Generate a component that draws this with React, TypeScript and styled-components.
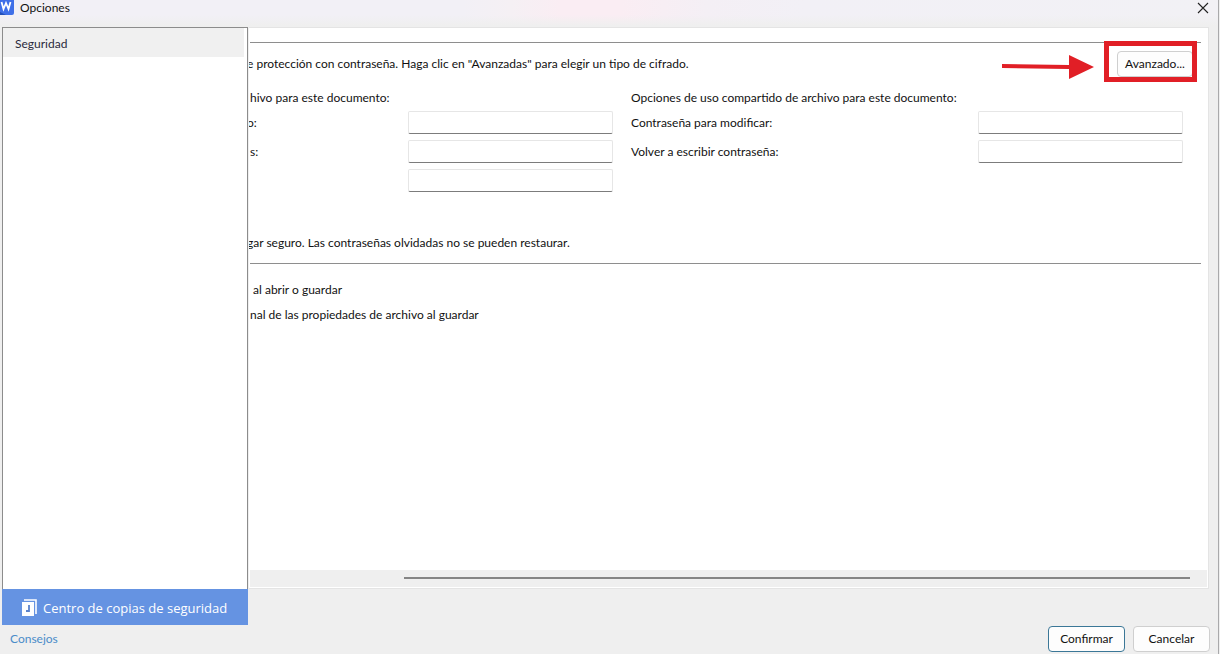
import React from 'react';
import styled, { createGlobalStyle } from 'styled-components';

const GlobalStyle = createGlobalStyle`
  * { box-sizing: border-box; }
  body { margin: 0; background: #efefef; }
  button, input { font: inherit; }
`;

const Dialog = styled.div`
  display: flex;
  flex-direction: column;
  height: 100vh;
  overflow: hidden;
  padding-left: 2px;
  margin-right: 1px;
  border-right: 1px solid #a9a9ab;
  background: #efefef;
  color: #111;
  font: 12px/20px Lato, 'Open Sans', sans-serif;
`;

const TitleBar = styled.header`
  display: flex;
  align-items: center;
  height: 27px;
  flex: none;
  margin-left: -2px;
  padding: 0 9px 12px 0;
  background:
    linear-gradient(180deg, transparent 55%, #efefef 95%),
    linear-gradient(90deg, #f2f0f6 0%, #f2f0f6 38%, #f5f0f4 42%, #faedf3 46%, #faedf3 51%, #f4eff5 58%, #f2f0f6 66%, #f2f1f5 100%);
`;

const Title = styled.h1`
  flex: 1;
  margin: 0 0 0 6px;
  font-size: 12px;
  font-weight: 400;
`;

const CloseButton = styled.button`
  display: flex;
  padding: 0;
  border: 0;
  background: none;
`;

const Body = styled.div`
  display: flex;
  flex: 1;
  min-height: 0;
`;

const Sidebar = styled.nav`
  display: flex;
  flex-direction: column;
  flex: none;
  width: 246px;
`;

const SectionList = styled.div`
  flex: 1;
  border: 1px solid #8c8c8c;
  border-bottom: 0;
  background: #fff;
`;

const SectionItem = styled.button`
  display: block;
  width: calc(100% - 3px);
  height: 29px;
  padding: 2px 12px 0;
  border: 0;
  background: #f0f0f0;
  color: #2a2a3c;
  text-align: left;
`;

const BackupButton = styled.button`
  display: flex;
  align-items: center;
  gap: 6px;
  height: 36px;
  padding: 1px 0 0 19px;
  border: 0;
  background: #6593e2;
  color: #fff;
  font-family: 'Open Sans', sans-serif;
  font-size: 13px;
  white-space: nowrap;
`;

const Panel = styled.main`
  display: flex;
  flex-direction: column;
  flex: 1;
  min-width: 0;
  margin: 0 9px 36px 1px;
  overflow: hidden;
  border: 1px solid #e4e4e4;
  border-left: 0;
  background: #fff;
  white-space: nowrap;
`;

const Content = styled.div`
  flex: 1;
  padding: 14px 7px 0 1px;
`;

const Rule = styled.hr`
  height: 1px;
  margin: 0;
  border: 0;
  background: #8e8e8e;
`;

const AdvancedRow = styled.div`
  display: flex;
  align-items: center;
  justify-content: space-between;
  height: 42px;
  padding-right: 8px;
`;

const Clipped = styled.span`
  margin-left: -3px;
`;

const Highlighted = styled.div`
  position: relative;
`;

const HighlightBox = styled.div`
  position: absolute;
  inset: -10px -4px -5px -13px;
  border: 5px solid #e11f26;
  pointer-events: none;
`;

const Arrow = styled.svg`
  position: absolute;
  top: 3px;
  right: 99px;
`;

const PushButton = styled.button<{ $primary?: boolean; $width: number }>`
  width: ${(p) => p.$width}px;
  height: 26px;
  padding: 0;
  border: 1px solid ${(p) => (p.$primary ? '#3b7797' : '#cfcfcf')};
  border-radius: 4px;
  background: #fdfdfd;
  color: #111;
`;

const Groups = styled.div`
  display: flex;
  gap: 18px;
  padding-right: 18px;
`;

const Group = styled.fieldset<{ $grow: number }>`
  flex: ${(p) => p.$grow} 1 0;
  min-width: 0;
  margin: 0;
  padding: 0;
  border: 0;
`;

const Legend = styled.legend`
  height: 26px;
  padding: 0;
  line-height: 26px;
`;

const Field = styled.label`
  display: flex;
  align-items: center;
  justify-content: space-between;
  height: 23px;
  margin-bottom: 6px;
`;

const PasswordInput = styled.input`
  width: 205px;
  height: 23px;
  margin-left: auto;
  padding: 0 4px;
  border: 1px solid #e6e6e6;
  border-bottom-color: #7c7c7c;
  border-radius: 2px;
  background: #fff;
`;

const Note = styled.p`
  margin: 35px 0 10px;
`;

const Privacy = styled.div`
  display: flex;
  flex-direction: column;
  gap: 5px;
  padding: 16px 0 0;
`;

const ScrollTrack = styled.div`
  display: flex;
  align-items: center;
  height: 17px;
  margin: 0 1px 1px;
  padding: 0 17px 2px 154px;
  background: #efefef;
`;

const ScrollThumb = styled.div`
  flex: 1;
  height: 2px;
  background: #858585;
`;

const Footer = styled.footer`
  display: flex;
  align-items: center;
  gap: 8px;
  flex: none;
  height: 29px;
  padding: 0 8px 2px;
`;

const TipsLink = styled.a`
  margin-right: auto;
  color: #4a8cc9;
  text-decoration: none;
`;

const Logo = () => (
  <svg width="14" height="15" viewBox="0 0 14 15" aria-hidden="true">
    <path d="M0 0h14v13a2 2 0 0 1-2 2H0z" fill="#3f6fe8" />
    <path d="M0 12l6 3H0z" fill="#2450b8" />
    <path d="M1.5 2l2 7L6 3l2.5 6 2-7" fill="none" stroke="#fff" strokeWidth="1.8" />
  </svg>
);

const BackupIcon = () => (
  <svg width="16" height="18" viewBox="0 0 16 18" aria-hidden="true">
    <path d="M3 1h12v14" fill="none" stroke="#fff" strokeWidth="1.6" />
    <path d="M1 3h12v14H1z" fill="#fff" />
    <path d="M8 6v6H5" fill="none" stroke="#5b83cc" strokeWidth="1.8" />
  </svg>
);

export default function App() {
  return (
    <>
      <GlobalStyle />
      <Dialog>
        <TitleBar>
          <Logo />
          <Title>Opciones</Title>
          <CloseButton aria-label="Cerrar">
            <svg width="12" height="12" viewBox="0 0 12 12">
              <path d="M1 1l10 10M11 1L1 11" stroke="#222" strokeWidth="1.1" />
            </svg>
          </CloseButton>
        </TitleBar>
        <Body>
          <Sidebar>
            <SectionList>
              <SectionItem>Seguridad</SectionItem>
            </SectionList>
            <BackupButton>
              <BackupIcon />
              Centro de copias de seguridad
            </BackupButton>
          </Sidebar>
          <Panel>
            <Content>
              <Rule />
              <AdvancedRow>
                <Clipped>e protección con contraseña. Haga clic en "Avanzadas" para elegir un tipo de cifrado.</Clipped>
                <Highlighted>
                  <PushButton $width={76}>Avanzado...</PushButton>
                  <HighlightBox />
                  <Arrow width="92" height="26" viewBox="0 0 92 26" aria-hidden="true">
                    <path d="M0 10l67 1V1l25 12-25 12V15L0 14z" fill="#e11f26" />
                  </Arrow>
                </Highlighted>
              </AdvancedRow>
              <Groups>
                <Group $grow={363}>
                  <Legend>hivo para este documento:</Legend>
                  <Field>
                    <Clipped>o:</Clipped>
                    <PasswordInput type="password" />
                  </Field>
                  <Field>
                    s:
                    <PasswordInput type="password" />
                  </Field>
                  <Field>
                    <PasswordInput type="password" aria-label="Volver a escribir" />
                  </Field>
                </Group>
                <Group $grow={552}>
                  <Legend>Opciones de uso compartido de archivo para este documento:</Legend>
                  <Field>
                    Contraseña para modificar:
                    <PasswordInput type="password" />
                  </Field>
                  <Field>
                    Volver a escribir contraseña:
                    <PasswordInput type="password" />
                  </Field>
                </Group>
              </Groups>
              <Note>
                <Clipped>gar seguro. Las contraseñas olvidadas no se pueden restaurar.</Clipped>
              </Note>
              <Rule />
              <Privacy>
                <span>&nbsp;al abrir o guardar</span>
                <span>nal de las propiedades de archivo al guardar</span>
              </Privacy>
            </Content>
            <ScrollTrack>
              <ScrollThumb />
            </ScrollTrack>
          </Panel>
        </Body>
        <Footer>
          <TipsLink href="#consejos">Consejos</TipsLink>
          <PushButton $width={77} $primary>Confirmar</PushButton>
          <PushButton $width={77}>Cancelar</PushButton>
        </Footer>
      </Dialog>
    </>
  );
}
